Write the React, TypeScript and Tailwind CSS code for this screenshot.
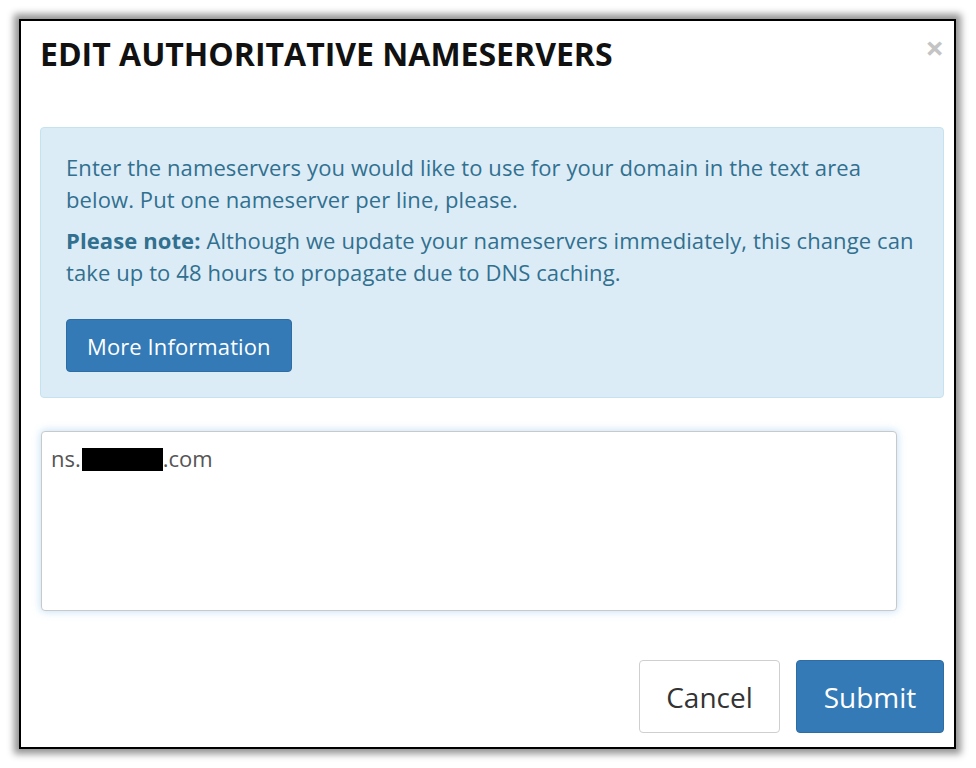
import React from "react";

const font = { fontFamily: "'Open Sans', 'Liberation Sans', sans-serif" };

export default function App() {
  return (
    <div className="w-[976px] h-[768px] bg-white pt-[19px] pl-[19px]" style={font}>
      <div className="w-[937px] h-[730px] border-2 border-black bg-white shadow-[0_0_7px_5px_rgba(0,0,0,0.42)] pl-[19px] pr-[10px] flex flex-col">
        {/* header */}
        <div className="relative h-[106px] flex items-start pt-[13px]">
          <h1 className="text-[32px] leading-[40px] font-bold text-[#111]">
            EDIT AUTHORITATIVE NAMESERVERS
          </h1>
          <span className="absolute right-[0px] top-[10px] text-[33px] leading-[33px] font-bold text-[#c4c4c4]">
            ×
          </span>
        </div>

        {/* info box */}
        <div className="bg-[#dcecf7] border border-[#c4e3ef] rounded-[4px] pl-[25px] pr-[24px] pt-[23px] pb-[25px] text-[#31708f] text-[22px] leading-[32px] tracking-[0.1px]">
          <p>
            Enter the nameservers you would like to use for your domain in the text area below. Put one nameserver per line, please.
          </p>
          <p className="mt-[9px]">
            <strong className="font-bold">Please note:</strong> Although we update your nameservers immediately, this change can take up to 48 hours to propagate due to DNS caching.
          </p>
          <button className="mt-[31px] h-[53px] px-[20px] bg-[#337ab7] border border-[#2e6da4] rounded-[4px] text-white text-[22px]">
            More Information
          </button>
        </div>

        {/* nameserver entry */}
        <div className="mt-[33px] ml-[1px] w-[856px] h-[180px] bg-white border border-[#c9c9c9] rounded-[4px] shadow-[0_0_8px_rgba(102,175,233,0.45)] px-[9px] pt-[11px] text-[22px] leading-[30px] text-[#555]">
          ns.<span className="inline-block w-[81px] h-[23px] ml-[1px] bg-black align-[-4px]"></span>.com
        </div>

        {/* actions */}
        <div className="mt-[49px] flex justify-end gap-[16px]">
          <button className="w-[141px] h-[73px] bg-white border border-[#cfcfcf] rounded-[4px] text-[28px] text-[#333]">
            Cancel
          </button>
          <button className="w-[148px] h-[73px] bg-[#337ab7] border border-[#2e6da4] rounded-[4px] text-[28px] text-white">
            Submit
          </button>
        </div>
      </div>
    </div>
  );
}
